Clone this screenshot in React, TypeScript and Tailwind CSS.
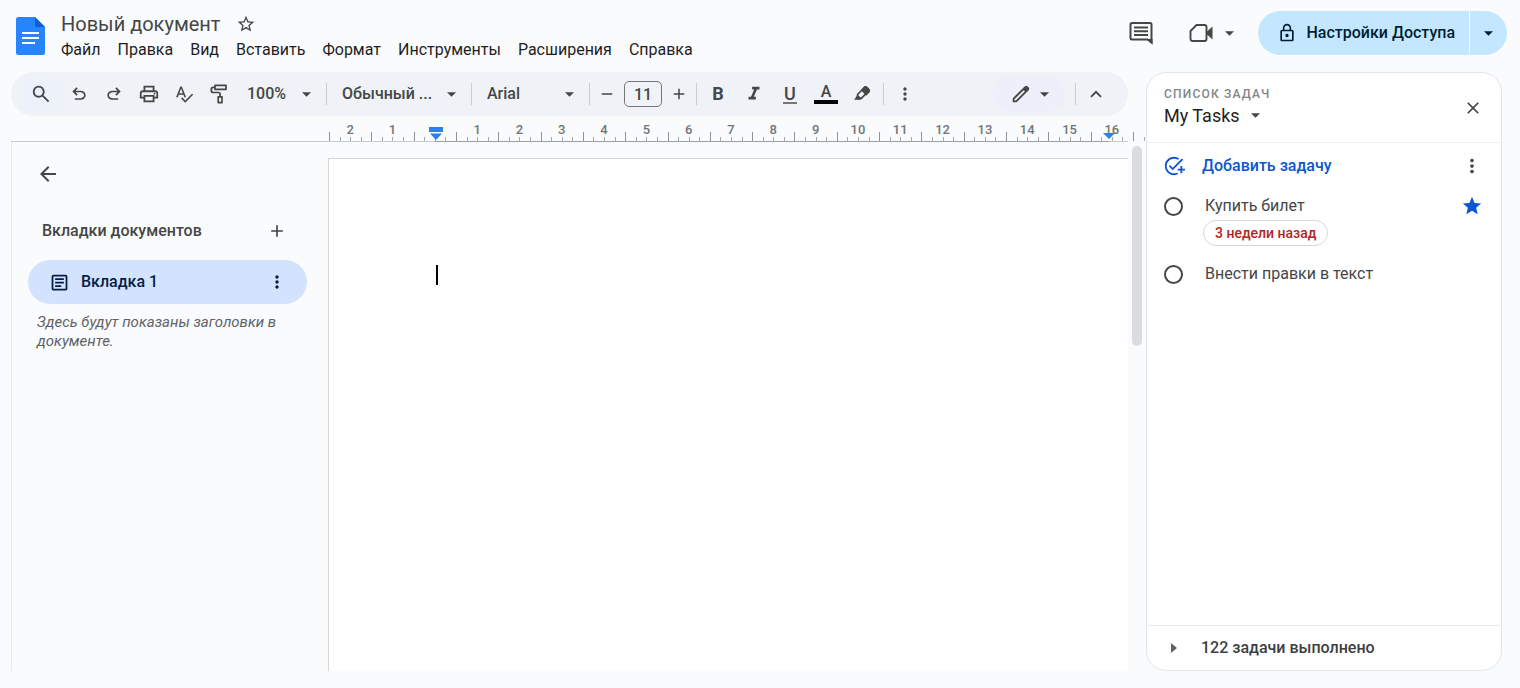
import type { ReactNode } from "react";
import {
    MdAdd,
    MdAddTask,
    MdArrowBack,
    MdClose,
    MdFormatItalic,
    MdLockOutline,
    MdMoreVert,
    MdOutlineArticle,
    MdRemove,
    MdSpellcheck,
    MdStar,
    MdStarBorder,
} from "react-icons/md";

interface Task {
    title: string;
    due?: string;
    starred?: boolean;
}

const menus = ["Файл", "Правка", "Вид", "Вставить", "Формат", "Инструменты", "Расширения", "Справка"];

const tasks: Task[] = [
    { title: "Купить билет", due: "3 недели назад", starred: true },
    { title: "Внести правки в текст" },
];

// one cell per centimetre, the number stands in the middle of its cell
const rulerCells = ["2", "1", "", "1", "2", "3", "4", "5", "6", "7", "8", "9", "10", "11", "12", "13", "14", "15", "16"];

const Symbol = ({ d, className }: { d: string; className: string }) => (
    <svg viewBox="0 -960 960 960" fill="currentColor" className={className} aria-hidden="true">
        <path d={d} />
    </svg>
);

const SEARCH = "M784-120 532-372q-30 24-69 38t-83 14q-109 0-184.5-75.5T120-580q0-109 75.5-184.5T380-840q109 0 184.5 75.5T640-580q0 44-14 83t-38 69l252 252-56 56ZM380-400q75 0 127.5-52.5T560-580q0-75-52.5-127.5T380-760q-75 0-127.5 52.5T200-580q0 75 52.5 127.5T380-400Z";
const UNDO = "M280-200v-80h284q63 0 109.5-40T720-420q0-60-46.5-100T564-560H312l104 104-56 56-200-200 200-200 56 56-104 104h252q97 0 166.5 63T800-420q0 94-69.5 157T564-200H280Z";
const REDO = "M396-200q-97 0-166.5-63T160-420q0-94 69.5-157T396-640h252L544-744l56-56 200 200-200 200-56-56 104-104H396q-63 0-109.5 40T240-420q0 60 46.5 100T396-280h284v80H396Z";
const PRINT = "M640-640v-120H320v120h-80v-200h480v200h-80Zm-480 80h640-640Zm560 100q17 0 28.5-11.5T760-500q0-17-11.5-28.5T720-540q-17 0-28.5 11.5T680-500q0 17 11.5 28.5T720-460Zm-80 260v-160H320v160h320Zm80 80H240v-160H80v-240q0-51 35-85.5t85-34.5h560q51 0 85.5 34.5T880-520v240H720v160Zm80-240v-160q0-17-11.5-28.5T760-560H200q-17 0-28.5 11.5T160-520v160h80v-80h480v80h80Z";
const EDIT = "M200-200h57l391-391-57-57-391 391v57Zm-80 80v-170l528-527q12-11 26.5-17t30.5-6q16 0 31 6t26 18l55 56q12 11 17.5 26t5.5 30q0 16-5.5 30.5T817-647L290-120H120Zm640-584-56-56 56 56Zm-141 85-28-29 57 57-29-28Z";

const Caret = ({ className = "" }: { className?: string }) => (
    <svg viewBox="0 0 10 5" fill="currentColor" className={`h-[5px] w-[9px] ${className}`} aria-hidden="true">
        <path d="M0 0h10L5 5z" />
    </svg>
);

const DocsLogo = () => (
    <svg viewBox="0 0 29 38" className="h-[38px] w-[29px]" aria-hidden="true">
        <path d="M2.500 0H19l10 10v25.500a2.500 2.500 0 0 1-2.500 2.500h-24A2.500 2.500 0 0 1 0 35.500v-33A2.500 2.500 0 0 1 2.500 0z" fill="#2684fc" />
        <path d="M19 0l10 10h-8a2 2 0 0 1-2-2z" fill="#0a5fd8" />
        <path d="M6 16h17M6 21h17M6 26h13" stroke="#fff" strokeWidth="2.200" />
    </svg>
);

const CommentIcon = () => (
    <svg viewBox="0 0 24 24" fill="none" stroke="currentColor" strokeWidth="2" className="h-6 w-6" aria-hidden="true">
        <path d="M22.500 21.500V3.500A1.500 1.500 0 0 0 21 2H3a1.500 1.500 0 0 0-1.500 1.500V17A1.500 1.500 0 0 0 3 18.500h15.500z" />
        <path d="M18 18l5.500 5.500V18z" fill="currentColor" stroke="none" />
        <path d="M5 6.500h14M5 10.300h14M5 14h14" />
    </svg>
);

const CameraIcon = () => (
    <svg viewBox="0 0 24 20" fill="none" stroke="currentColor" strokeWidth="1.900" className="h-5 w-6" aria-hidden="true">
        <path d="M7.500 2H15.500a2 2 0 0 1 2 2v12a2 2 0 0 1-2 2h-12a2 2 0 0 1-2-2V8z" strokeLinejoin="round" />
        <path d="M18 8.500l5.500-5v13L18 11.500z" fill="currentColor" stroke="none" />
    </svg>
);

const PaintIcon = () => (
    <svg viewBox="0 0 18 20" fill="none" stroke="currentColor" strokeWidth="1.700" className="h-5 w-[18px]" aria-hidden="true">
        <path d="M5 1.300h11v4H5z" strokeLinejoin="round" />
        <path d="M5 3.300H3.300a2 2 0 0 0-2 2v1.200a2 2 0 0 0 2 2h5.200a1.600 1.600 0 0 1 1.600 1.600v2.700" />
        <path d="M8.200 12.800h3.800v5.800H8.200z" strokeLinejoin="round" />
    </svg>
);

const HighlightIcon = () => (
    <svg viewBox="0 0 18 18" fill="none" stroke="currentColor" strokeWidth="1.700" className="h-[18px] w-[18px]" aria-hidden="true">
        <path d="M4.500 9.500l7-7a1.600 1.600 0 0 1 2.300 0l1.500 1.500a1.600 1.600 0 0 1 0 2.300l-7 7-3.300.4z" strokeLinejoin="round" />
        <path d="M9 5.200l4.300 4.300 2.500-2.500a1.600 1.600 0 0 0 0-2.300L13.500 2.300a1.600 1.600 0 0 0-2.200 0z" fill="currentColor" />
        <path d="M4.500 10L1 14.800h6.500l1-1.800z" fill="currentColor" stroke="none" />
    </svg>
);

const Divider = () => <span className="mx-[7px] h-[22px] w-px shrink-0 bg-[#c9ccd1]" />;

const ToolButton = ({ label, className = "w-7", children }: { label: string; className?: string; children: ReactNode }) => (
    <button aria-label={label} className={`flex h-8 shrink-0 items-center justify-center ${className}`}>
        {children}
    </button>
);

const ToolSelect = ({ label, value, className }: { label: string; value: string; className: string }) => (
    <div className={`relative flex shrink-0 items-center ${className}`}>
        <select aria-label={label} className="h-8 w-full appearance-none bg-transparent pl-2 text-base">
            <option>{value}</option>
        </select>
        <Caret className="pointer-events-none absolute right-2" />
    </div>
);

const Header = () => (
    <header className="flex h-[72px] shrink-0 pl-4 pr-[13px]">
        <div className="pt-[17px]">
            <DocsLogo />
        </div>
        <div className="ml-4 pt-3">
            <div className="flex items-center gap-4">
                <h1 className="text-xl leading-6">Новый документ</h1>
                <button aria-label="Пометить">
                    <MdStarBorder className="h-5 w-5" />
                </button>
            </div>
            <nav className="mt-1 flex gap-[17px] text-base leading-5 text-[#1f1f1f]">
                {menus.map((menu) => (
                    <button key={menu}>{menu}</button>
                ))}
            </nav>
        </div>
        <div className="ml-auto mt-[11px] flex h-11 items-center self-start">
            <button aria-label="Комментарии">
                <CommentIcon />
            </button>
            <button aria-label="Видеовстреча" className="ml-9 flex items-center gap-3">
                <CameraIcon />
                <Caret />
            </button>
            <div className="ml-6 flex h-11 overflow-hidden rounded-full bg-[#c2e7ff] text-[#001d35]">
                <button className="flex items-center gap-[10px] pl-[19px] pr-[14px] text-base font-medium">
                    <MdLockOutline className="h-5 w-5" />
                    Настройки Доступа
                </button>
                <button aria-label="Ещё" className="flex w-[38px] items-center justify-center border-l border-[#fafbfd]">
                    <Caret />
                </button>
            </div>
        </div>
    </header>
);

const Toolbar = () => (
    <div className="mr-[18px] flex h-11 shrink-0 items-center rounded-full bg-[#eff3f8] pl-[10px] pr-[18px] font-medium">
        <ToolButton label="Поиск" className="w-10 bg-[#edf1fa]">
            <Symbol d={SEARCH} className="h-[22px] w-[22px]" />
        </ToolButton>
        <ToolButton label="Отменить" className="w-[35px]">
            <Symbol d={UNDO} className="h-5 w-5" />
        </ToolButton>
        <ToolButton label="Повторить" className="w-[35px]">
            <Symbol d={REDO} className="h-5 w-5" />
        </ToolButton>
        <ToolButton label="Печать" className="w-[35px]">
            <Symbol d={PRINT} className="h-[22px] w-[22px]" />
        </ToolButton>
        <ToolButton label="Правописание" className="w-[35px]">
            <MdSpellcheck className="h-5 w-5" />
        </ToolButton>
        <ToolButton label="Копировать форматирование" className="w-[35px]">
            <PaintIcon />
        </ToolButton>
        <ToolSelect label="Масштаб" value="100%" className="ml-[3px] w-20" />
        <Divider />
        <ToolSelect label="Стиль" value="Обычный ..." className="w-[130px]" />
        <Divider />
        <ToolSelect label="Шрифт" value="Arial" className="w-[103px]" />
        <Divider />
        <ToolButton label="Уменьшить" className="w-5">
            <MdRemove className="h-[18px] w-[18px]" />
        </ToolButton>
        <input
            aria-label="Размер шрифта"
            defaultValue="11"
            className="mx-[7px] h-[26px] w-[38px] shrink-0 rounded-[5px] border border-[#747775] text-center text-base"
        />
        <ToolButton label="Увеличить" className="w-5">
            <MdAdd className="h-[18px] w-[18px]" />
        </ToolButton>
        <Divider />
        <div className="flex gap-2">
            <ToolButton label="Полужирный">
                <span className="text-lg font-bold">B</span>
            </ToolButton>
            <ToolButton label="Курсив">
                <MdFormatItalic className="h-[22px] w-[22px]" />
            </ToolButton>
            <ToolButton label="Подчеркнутый">
                <span className="w-[14px] border-b-2 border-[#747775] text-center text-lg leading-[17px]">U</span>
            </ToolButton>
            <ToolButton label="Цвет текста">
                <span className="w-6 border-b-4 border-black text-center text-base leading-4">A</span>
            </ToolButton>
            <ToolButton label="Цвет выделения">
                <HighlightIcon />
            </ToolButton>
        </div>
        <Divider />
        <ToolButton label="Ещё">
            <MdMoreVert className="h-5 w-5" />
        </ToolButton>
        <button aria-label="Режим" className="ml-auto flex h-9 w-[72px] items-center justify-center gap-2 rounded-full bg-[#edf0fa]">
            <Symbol d={EDIT} className="h-[22px] w-[22px]" />
            <Caret />
        </button>
        <span className="ml-[10px] mr-[6px] h-[22px] w-px bg-[#c9ccd1]" />
        <ToolButton label="Скрыть меню">
            <svg viewBox="0 0 12 8" fill="none" stroke="currentColor" strokeWidth="1.800" className="h-2 w-3" aria-hidden="true">
                <path d="M1 6.800L6 1.800l5 5" />
            </svg>
        </ToolButton>
    </div>
);

const Ruler = () => (
    <div className="relative flex h-[26px] shrink-0 pl-[318px] text-[13px] font-medium text-[#70757a]">
        <div className="grid flex-1 grid-cols-[repeat(19,minmax(0,1fr))]">
            {rulerCells.map((cell, index) => (
                <div key={index} className="relative grid h-[25px] grid-cols-4 items-end">
                    <span className="h-[9px] w-px bg-[#8f9296]" />
                    <span className="h-1 w-px bg-[#a5a8ac]" />
                    <span className="h-1 w-px bg-[#a5a8ac]" />
                    <span className="h-1 w-px bg-[#a5a8ac]" />
                    <span className="absolute inset-x-0 top-[6px] text-center leading-4">{cell}</span>
                </div>
            ))}
        </div>
        <div className="flex h-[25px] w-[13px] items-end justify-between">
            <span className="h-[9px] w-px bg-[#8f9296]" />
            <span className="mr-px h-1 w-px bg-[#a5a8ac]" />
        </div>
        <span className="absolute bottom-0 left-0 right-[18px] h-px bg-[#c9cbcd]" />
        <span className="absolute bottom-0 left-[424px] right-[37px] h-px bg-[#9c9e9f]" />
        {/* indent markers */}
        <svg viewBox="0 0 14 13" fill="#2f7cf6" className="absolute bottom-[2px] left-[418px] h-[13px] w-[14px]" aria-hidden="true">
            <path d="M0 0h14v5H0zM1 6.500h12L7 13z" />
        </svg>
        <svg viewBox="0 0 12 6" fill="#2f7cf6" className="absolute bottom-[3px] right-[31px] h-[6px] w-3" aria-hidden="true">
            <path d="M0 0h12L6 6z" />
        </svg>
    </div>
);

const Outline = () => (
    <aside className="w-[317px] shrink-0 border-l border-[#e9ebee] pl-4 pr-[21px] pt-5">
        <button aria-label="Назад" className="ml-2 flex h-6 w-6 items-center justify-center">
            <MdArrowBack className="h-6 w-6" />
        </button>
        <div className="mt-8 flex h-[26px] items-center justify-between pl-[14px] pr-5">
            <h2 className="text-base font-medium text-[#444746]">Вкладки документов</h2>
            <button aria-label="Добавить вкладку">
                <MdAdd className="h-5 w-5" />
            </button>
        </div>
        <div className="mt-4 flex h-11 items-center rounded-full bg-[#d3e3fd] pl-[21px] pr-5 text-[#041e49]">
            <button className="flex flex-1 items-center gap-[11px] text-left text-base font-medium">
                <MdOutlineArticle className="h-[21px] w-[21px]" />
                Вкладка 1
            </button>
            <button aria-label="Параметры вкладки">
                <MdMoreVert className="h-5 w-5" />
            </button>
        </div>
        <p className="ml-[9px] mt-[9px] text-[15px] italic leading-[19px] text-[#5f6368]">Здесь будут показаны заголовки в документе.</p>
    </aside>
);

const TasksPanel = () => (
    <aside className="flex w-[356px] shrink-0 flex-col overflow-hidden rounded-[20px] border border-[#e3e5ea] bg-white">
        <div className="flex h-[70px] shrink-0 items-center justify-between border-b border-[#eef0f2] pl-[17px] pr-[18px]">
            <div>
                <div className="text-xs font-medium leading-4 tracking-widest text-[#80868b]">СПИСОК ЗАДАЧ</div>
                <div className="relative flex w-24 items-center">
                    <select aria-label="Список задач" className="w-full appearance-none bg-transparent text-lg leading-7 text-[#1f1f1f]">
                        <option>My Tasks</option>
                    </select>
                    <Caret className="pointer-events-none absolute right-0" />
                </div>
            </div>
            <button aria-label="Закрыть">
                <MdClose className="h-5 w-5" />
            </button>
        </div>
        <div className="flex h-[46px] items-center pl-4 pr-[18px]">
            <button className="flex items-center gap-[17px] text-base font-medium text-[#0b57d0]">
                <MdAddTask className="h-[22px] w-[22px]" />
                Добавить задачу
            </button>
            <button aria-label="Действия" className="ml-auto">
                <MdMoreVert className="h-[22px] w-[22px]" />
            </button>
        </div>
        <ul className="flex flex-1 flex-col gap-3 pt-px">
            {tasks.map((task) => (
                <li key={task.title} className="flex items-start pl-[17px] pr-[18px]">
                    <label className="flex gap-[22px] text-base leading-6">
                        <input type="checkbox" className="mt-[7px] h-[19px] w-[19px] shrink-0 appearance-none rounded-full border-2 border-[#444746]" />
                        <span>
                            <span className="block pt-1">{task.title}</span>
                            {task.due && (
                                <span className="-ml-0.5 mt-0.5 flex h-[26px] items-center rounded-full border border-[#d5d7da] px-[11px] text-sm font-medium text-[#b3261e]">
                                    {task.due}
                                </span>
                            )}
                        </span>
                    </label>
                    {task.starred && (
                        <button aria-label="Помечено" className="ml-auto mt-[5px] text-[#0b57d0]">
                            <MdStar className="h-[22px] w-[22px]" />
                        </button>
                    )}
                </li>
            ))}
        </ul>
        <button className="flex h-[45px] shrink-0 items-center gap-6 border-t border-[#e9ebee] pl-6 text-base font-medium text-[#3c4043]">
            <svg viewBox="0 0 6 10" fill="#5f6368" className="h-[10px] w-[6px]" aria-hidden="true">
                <path d="M0 0l6 5-6 5z" />
            </svg>
            122 задачи выполнено
        </button>
    </aside>
);

const App = () => (
    <div className="flex h-screen min-w-[1280px] flex-col bg-[#fafbfd] font-['Roboto',sans-serif] text-[#444746]">
        <Header />
        <div className="flex min-h-0 flex-1 pb-[17px] pl-[11px] pr-[18px]">
            <div className="flex min-w-0 flex-1 flex-col">
                <Toolbar />
                <Ruler />
                <div className="flex min-h-0 flex-1">
                    <Outline />
                    <main className="min-w-0 flex-1 pt-4">
                        <div className="h-full border-l border-t border-[#d3d6d5] bg-white pl-[107px] pt-[106px]">
                            <div className="h-5 w-[2px] bg-black" />
                        </div>
                    </main>
                    <div className="w-[18px] shrink-0 pl-1 pt-1">
                        <div className="h-[200px] w-[10px] rounded-full bg-[#dadce0]" />
                    </div>
                </div>
            </div>
            <TasksPanel />
        </div>
    </div>
);

export default App;
